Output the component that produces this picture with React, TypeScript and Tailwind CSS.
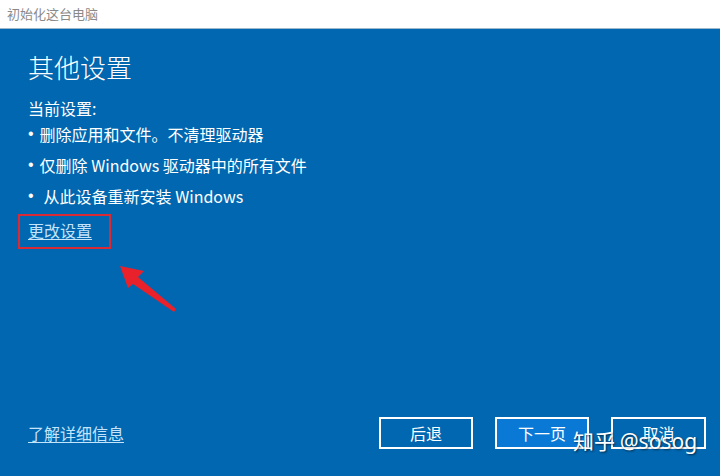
import React from 'react';

const cjk = { fontFamily: '"Noto Sans CJK SC", "Noto Sans", sans-serif' };

const bullets = [
    { text: '删除应用和文件。不清理驱动器', pad: 'pl-[6px]' },
    { text: '仅删除 Windows 驱动器中的所有文件', pad: 'pl-[6px]' },
    { text: '从此设备重新安装 Windows', pad: 'pl-[10px]' },
];

const Arrow: React.FC = () => (
    <svg className="absolute left-[110px] top-[228px]" width="80" height="64" viewBox="0 0 80 64">
        {/* tip sits at page (120,237) */}
        <polygon points="10,9 34,14 28,20 66,52 64,55 23,27 18,31" fill="#e8212b" />
    </svg>
);

export default function App() {
    return (
        <div className="w-[720px] h-[476px] flex flex-col overflow-hidden relative" style={cjk}>
            <div className="h-[29px] bg-white border-b border-[#9fb7cc] flex items-center px-[7px]">
                <span className="text-[13px] text-[#8a8a8a]">初始化这台电脑</span>
            </div>

            <div className="flex-1 bg-[#0067b0] flex flex-col relative text-white">
                <div className="flex-1 pl-7 pt-[20px]">
                    <h1 className="text-[26px] leading-[36px] font-light">其他设置</h1>
                    <p className="text-[16px] leading-[24px] mt-[11px]">当前设置:</p>
                    <ul className="mt-[2px]">
                        {bullets.map((b, i) => (
                            <li key={i} className={`flex text-[16px] leading-[24px] ${i > 0 ? 'mt-[7px]' : ''}`}>
                                <span className="font-['Liberation_Sans']">•</span>
                                <span className={b.pad}>{b.text}</span>
                            </li>
                        ))}
                    </ul>
                    <div className="relative mt-[10px] inline-block">
                        <a className="text-[16px] leading-[24px] text-[#c4e4fb] underline underline-offset-2">更改设置</a>
                        <div className="absolute -left-[10px] -top-[4px] w-[93px] h-[35px] border-2 border-[#d92a35]" />
                    </div>
                </div>
                <Arrow />

                <div className="flex items-center pl-7 pr-[14px] pb-[27px]">
                    <a className="text-[16px] leading-[24px] text-[#c4e4fb] underline underline-offset-2">了解详细信息</a>
                    <div className="ml-auto flex gap-[22px]">
                        <button className="w-[94px] h-[32px] border-2 border-white text-[16px] text-white">后退</button>
                        <button className="w-[94px] h-[32px] border-2 border-white bg-[#0a79d6] text-[16px] text-white">下一页</button>
                        <button className="w-[95px] h-[32px] border-2 border-white text-[16px] text-white">取消</button>
                    </div>
                </div>
            </div>

            <div className="absolute left-[573px] top-[427px] text-[21px] leading-[26px] text-white [text-shadow:1px_1px_2px_rgba(0,0,0,0.6)] whitespace-nowrap">
                知乎 <span style={{ fontFamily: '"Noto Sans", sans-serif' }}>@sosog</span>
            </div>
        </div>
    );
}
